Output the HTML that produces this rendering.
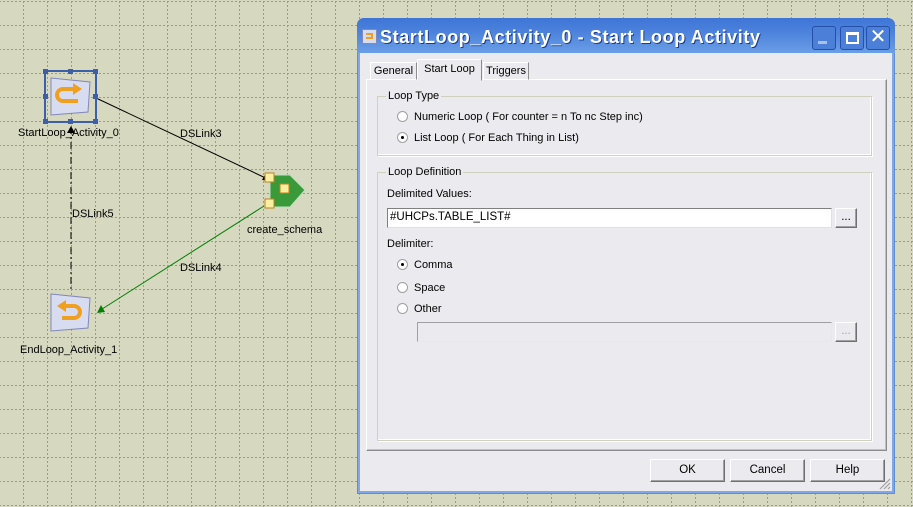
<!DOCTYPE html>
<html><head><style>
*{margin:0;padding:0;box-sizing:border-box}
body{width:913px;height:507px;overflow:hidden;background:#d6d8c0;font-family:"Liberation Sans",sans-serif;font-size:11px;color:#000;position:relative}
.a{position:absolute}
.grp{position:absolute;border:1px solid #d0d0bf;box-shadow:inset -1px -1px 0 #fff,1px 1px 0 #fff}
.legend{position:absolute;top:-7px;left:8px;background:#ebeaee;padding:0 2px}
.radio{position:absolute;width:11px;height:11px;border-radius:50%;background:#fff;border:1px solid #a0a0a0}
.radio.on::after{content:"";position:absolute;left:3px;top:3px;width:3px;height:3px;background:#000;border-radius:50%}
.btn{position:absolute;background:#ebeaee;border:1px solid;border-color:#fff #707070 #707070 #fff;box-shadow:inset -1px -1px 0 #a0a0a0;text-align:center;line-height:20px;font-size:11.5px}
</style></head><body>
<svg class="a" style="left:0;top:0" width="913" height="507">
<defs><pattern id="g" x="23" y="1" width="24" height="24" patternUnits="userSpaceOnUse">
<line x1="0.5" y1="0" x2="0.5" y2="24" stroke="#9a9a94" stroke-dasharray="2 2"/>
<line x1="0" y1="0.5" x2="24" y2="0.5" stroke="#9a9a94" stroke-dasharray="2 2"/></pattern></defs>
<rect width="913" height="507" fill="url(#g)"/>
<line x1="96" y1="98" x2="272" y2="181" stroke="#000"/>
<polygon points="272,181 262,180 266,173" fill="#000"/>
<line x1="71" y1="127" x2="71" y2="292" stroke="#000" stroke-dasharray="7 3 2 3"/>
<polygon points="71,126 67,133 75,133" fill="#000"/>
<line x1="264" y1="206" x2="99" y2="311" stroke="#008000"/>
<polygon points="97,313 101,305 105,312" fill="#008000"/>
<rect x="45" y="71" width="51" height="51" fill="none" stroke="#3c5fa8" stroke-width="2"/>
<g fill="#3c5fa8"><rect x="43" y="69" width="5" height="5"/><rect x="68" y="69" width="5" height="5"/><rect x="93" y="69" width="5" height="5"/><rect x="43" y="94" width="5" height="5"/><rect x="93" y="94" width="5" height="5"/><rect x="43" y="119" width="5" height="5"/><rect x="68" y="119" width="5" height="5"/><rect x="93" y="119" width="5" height="5"/></g>
<polygon points="51,78 90,82 88,112 51,115" fill="#d8dcf0" stroke="#8088b8"/>
<path d="M74,89 H63 A6,6 0 0 0 63,101 H78" fill="none" stroke="#f0a020" stroke-width="4"/>
<polygon points="73,83 82,89 73,95" fill="#f0a020"/>
<polygon points="51,294 90,298 88,328 51,331" fill="#d8dcf0" stroke="#8088b8"/>
<path d="M65,306 H74 A6,6 0 0 1 74,318 H62" fill="none" stroke="#f0a020" stroke-width="4"/>
<polygon points="66,300 57,306 66,312" fill="#f0a020"/>
<polygon points="270,175 290,175 305,190 290,207 270,207" fill="#3a9a3a" stroke="#c0e0c0"/>
<rect x="265" y="173" width="9" height="9" fill="#f8f0a0" stroke="#c08020"/>
<rect x="280" y="184" width="9" height="9" fill="#f8f0a0" stroke="#c08020"/>
<rect x="265" y="199" width="9" height="9" fill="#f8f0a0" stroke="#c08020"/>
<g font-family="Liberation Sans" font-size="11" fill="#000">
<text x="18" y="136">StartLoop_Activity_0</text>
<text x="180" y="137">DSLink3</text>
<text x="72" y="217">DSLink5</text>
<text x="247" y="233">create_schema</text>
<text x="180" y="271">DSLink4</text>
<text x="20" y="353">EndLoop_Activity_1</text>
</g>
</svg>
<div class="a" style="left:357px;top:18px;width:538px;height:476px;background:#ebeaee;border:1px solid #5d8ed8;border-top:none;border-radius:7px 7px 0 0;box-shadow:inset 0 0 0 2px #7fa8ec"></div>
<div class="a" style="left:357px;top:18px;width:538px;height:35px;border-radius:7px 7px 0 0;background:linear-gradient(#3e74d6,#4c82dc 40%,#6a9ee6)"></div>
<div class="a" style="left:362px;top:29px;width:15px;height:15px;background:#d8dcf0;border:1px solid #8088b8"><div style="margin:3px;width:7px;height:6px;border:2px solid #f0a020;border-left:none"></div></div>
<div class="a" style="left:380px;top:27px;color:#fff;font-weight:bold;font-size:18px;letter-spacing:0.6px;text-shadow:1px 1px 0 #1a3c90">StartLoop_Activity_0 - Start Loop Activity</div>
<div class="a" style="left:812px;top:26px;width:24px;height:24px;border:1px solid #2450a8;border-radius:3px;background:#4b7fd8"><div style="position:absolute;left:5px;top:14px;width:9px;height:3px;background:#a8c0f0"></div></div>
<div class="a" style="left:840px;top:26px;width:24px;height:24px;border:1px solid #2450a8;border-radius:3px;background:#4b7fd8"><div style="position:absolute;left:5px;top:5px;width:13px;height:12px;border:2px solid #fff;border-top-width:3px"></div></div>
<div class="a" style="left:866px;top:26px;width:24px;height:24px;border:1px solid #2450a8;border-radius:3px;background:#4b7fd8;color:#fff;font-size:20px;line-height:21px;text-align:center">✕</div>
<div class="a" style="left:366px;top:79px;width:521px;height:372px;border:1px solid;border-color:#fff #8c8c8c #8c8c8c #fff;box-shadow:inset -1px -1px 0 #c0c0c0"></div>
<div class="a" style="left:370px;top:62px;width:47px;height:18px;border:1px solid;border-color:#fff #8c8c8c transparent #fff;line-height:17px;text-align:center">General</div>
<div class="a" style="left:483px;top:62px;width:46px;height:18px;border:1px solid;border-color:#fff #8c8c8c transparent #fff;line-height:17px;text-align:center">Triggers</div>
<div class="a" style="left:417px;top:59px;width:65px;height:22px;border:1px solid;border-color:#fff #8c8c8c transparent #fff;background:#ebeaee;line-height:18px;text-align:center">Start Loop</div>
<div class="grp" style="left:377px;top:96px;width:495px;height:60px"><span class="legend">Loop Type</span></div>
<div class="radio" style="left:397px;top:111px"></div><div class="a" style="left:414px;top:111px">Numeric Loop ( For counter = n To nc Step inc)</div>
<div class="radio on" style="left:397px;top:132px"></div><div class="a" style="left:414px;top:132px">List Loop ( For Each Thing in List)</div>
<div class="grp" style="left:377px;top:172px;width:495px;height:269px"><span class="legend">Loop Definition</span></div>
<div class="a" style="left:387px;top:188px">Delimited Values:</div>
<div class="a" style="left:387px;top:208px;width:445px;height:20px;background:#fff;line-height:17px;padding-left:2px;border:1px solid;border-color:#808080 #e0e0e0 #e0e0e0 #808080;font-size:11.5px">#UHCPs.TABLE_LIST#</div>
<div class="btn" style="left:835px;top:208px;width:22px;height:20px;line-height:16px">...</div>
<div class="a" style="left:387px;top:238px">Delimiter:</div>
<div class="radio on" style="left:397px;top:259px"></div><div class="a" style="left:414px;top:259px">Comma</div>
<div class="radio" style="left:397px;top:282px"></div><div class="a" style="left:414px;top:282px">Space</div>
<div class="radio" style="left:397px;top:303px"></div><div class="a" style="left:414px;top:303px">Other</div>
<div class="a" style="left:417px;top:322px;width:415px;height:20px;background:#ebeaee;border:1px solid;border-color:#a0a0a0 #e8e8e8 #e8e8e8 #a0a0a0"></div>
<div class="btn" style="left:835px;top:322px;width:22px;height:20px;line-height:16px;color:#a0a0a0">...</div>
<div class="btn" style="left:650px;top:459px;width:75px;height:23px">OK</div>
<div class="btn" style="left:730px;top:459px;width:75px;height:23px">Cancel</div>
<div class="btn" style="left:810px;top:459px;width:75px;height:23px">Help</div>
<svg class="a" style="left:879px;top:478px" width="12" height="12"><path d="M11,1 L1,11 M11,5 L5,11 M11,9 L9,11" stroke="#a0a0a0" stroke-width="1.2"/></svg>
</body></html>
